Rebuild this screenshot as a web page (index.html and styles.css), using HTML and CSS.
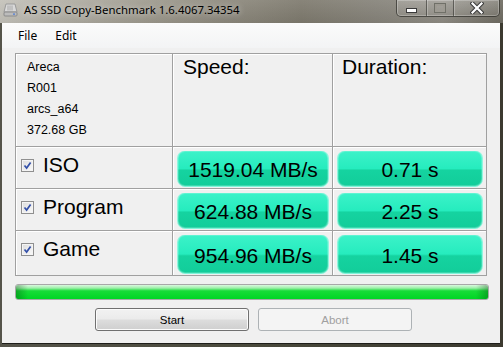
FILE: index.html
```html
<!DOCTYPE html>
<html lang="en">

<head>
    <meta charset="UTF-8">
    <title>AS SSD Copy-Benchmark 1.6.4067.34354</title>
    <link rel="stylesheet" href="styles.css">
</head>

<body>

    <div class="window">
        <!-- Title bar -->
        <div class="titlebar">
            <svg class="app-icon" width="15" height="14" viewBox="0 0 15 14">
                <path d="M3 1 L12 1 L14 9 L1 9 Z" fill="#d9d9d9" stroke="#9a9a9a" stroke-width="1"/>
                <path d="M5 2.5 L5 7.5 M7 2.5 L7 7.5 M9 2.5 L9 7.5" stroke="#a8a8a8" stroke-width="1"/>
                <rect x="1" y="9" width="13" height="4" rx="1" fill="#bcbcbc" stroke="#8a8a8a" stroke-width="1"/>
                <rect x="10" y="10.5" width="2" height="1.2" fill="#4a7bd8"/>
            </svg>
            <span class="title">AS SSD Copy-Benchmark 1.6.4067.34354</span>
            <div class="caption-buttons">
                <span class="cap-btn cap-min"><i></i></span>
                <span class="cap-btn cap-max"><i></i></span>
                <span class="cap-btn cap-close">
                    <svg width="14" height="12" viewBox="0 0 14 12">
                        <path d="M2.5 1.5 L11.5 10.5 M11.5 1.5 L2.5 10.5" stroke="#3a3a3a" stroke-width="4.2" stroke-linecap="square"/>
                        <path d="M2.5 1.5 L11.5 10.5 M11.5 1.5 L2.5 10.5" stroke="#ffffff" stroke-width="2.2" stroke-linecap="square"/>
                    </svg>
                </span>
            </div>
        </div>

        <div class="client">
            <!-- Menu -->
            <div class="menubar">
                <span class="menu-item">File</span>
                <span class="menu-item">Edit</span>
            </div>

            <!-- Results grid -->
            <div class="results">
                <div class="cell info">
                    <div>Areca</div>
                    <div>R001</div>
                    <div>arcs_a64</div>
                    <div>372.68 GB</div>
                </div>
                <div class="cell head head-speed">Speed:</div>
                <div class="cell head head-duration">Duration:</div>

                <div class="cell label">
                    <span class="checkbox"><svg width="11" height="11" viewBox="0 0 11 11"><path d="M2.5 5.5 L4.6 8 L8.6 2.5" fill="none" stroke="#3350a8" stroke-width="1.7"/></svg></span>
                    <span>ISO</span>
                </div>
                <div class="cell value"><div class="bar">1519.04 MB/s</div></div>
                <div class="cell value"><div class="bar">0.71 s</div></div>

                <div class="cell label">
                    <span class="checkbox"><svg width="11" height="11" viewBox="0 0 11 11"><path d="M2.5 5.5 L4.6 8 L8.6 2.5" fill="none" stroke="#3350a8" stroke-width="1.7"/></svg></span>
                    <span>Program</span>
                </div>
                <div class="cell value"><div class="bar">624.88 MB/s</div></div>
                <div class="cell value"><div class="bar">2.25 s</div></div>

                <div class="cell label">
                    <span class="checkbox"><svg width="11" height="11" viewBox="0 0 11 11"><path d="M2.5 5.5 L4.6 8 L8.6 2.5" fill="none" stroke="#3350a8" stroke-width="1.7"/></svg></span>
                    <span>Game</span>
                </div>
                <div class="cell value"><div class="bar">954.96 MB/s</div></div>
                <div class="cell value"><div class="bar">1.45 s</div></div>
            </div>

            <!-- Progress -->
            <div class="progress">
                <div class="progress-fill" style="width: 100%;"></div>
            </div>

            <!-- Buttons -->
            <div class="actions">
                <button class="btn">Start</button>
                <button class="btn" disabled>Abort</button>
            </div>
        </div>
    </div>

</body>

</html>
```

FILE: styles.css
```css
html,
body {
    margin: 0;
    padding: 0;
}

body {
    width: 503px;
    height: 347px;
    overflow: hidden;
    background: linear-gradient(to right, #55544a 0%, #4a4a3c 50%, #3c3a30 100%);
    font-family: "Liberation Sans", Arial, sans-serif;
}

.window {
    display: flex;
    flex-direction: column;
    height: 347px;
}

/* Title bar (Aero glass) */
.titlebar {
    height: 23px;
    display: flex;
    align-items: flex-start;
    background:
        linear-gradient(to bottom, rgba(255, 255, 255, 0.08), rgba(0, 0, 0, 0.05)),
        linear-gradient(to right, #c4c2ba 0%, #b2afa5 12%, #9d998d 30%, #8d897d 45%, #7e7a6e 60%, #86837a 75%, #8f8c84 88%, #6f6c62 100%);
}

.app-icon {
    margin: 3px 0 0 3px;
    flex-shrink: 0;
}

.title {
    margin: 2px 0 0 6px;
    font-family: "Noto Sans", "Open Sans", sans-serif;
    font-size: 11.4px;
    line-height: 16px;
    color: #000;
    text-shadow: 0 0 6px rgba(255, 255, 255, 0.7);
}

.caption-buttons {
    display: flex;
    margin-left: auto;
    margin-right: 3px;
    height: 16px;
    border: 1px solid rgba(40, 40, 36, 0.65);
    border-top: none;
    border-radius: 0 0 5px 5px;
    box-shadow: inset 0 0 0 1px rgba(255, 255, 255, 0.25);
    overflow: hidden;
}

.cap-btn {
    display: flex;
    align-items: center;
    justify-content: center;
    height: 16px;
    background: linear-gradient(to bottom, rgba(255, 255, 255, 0.18), rgba(255, 255, 255, 0.05));
}

.cap-btn + .cap-btn {
    border-left: 1px solid rgba(40, 40, 36, 0.55);
    box-shadow: inset 1px 0 0 rgba(255, 255, 255, 0.25);
}

.cap-min {
    width: 29px;
}

.cap-min i {
    display: block;
    width: 9px;
    height: 3px;
    margin-top: 5px;
    background: #fff;
    border: 1px solid #3a3a3a;
}

.cap-max {
    width: 26px;
}

.cap-max i {
    display: block;
    width: 6px;
    height: 4px;
    border: 2px solid #9d9a92;
    outline: 1px solid #707068;
}

.cap-close {
    width: 45px;
}

/* Client area */
.client {
    flex: 1;
    display: flex;
    flex-direction: column;
    margin: 0 3px 3px 2px;
    background-color: #f0f0f0;
    border-bottom: 1px solid #1e1e1a;
}

.menubar {
    height: 25px;
    display: flex;
    align-items: center;
    padding-left: 16px;
    gap: 18px;
    background: linear-gradient(to bottom, #fbfbfb, #f3f4f5);
    font-family: "Noto Sans", "Open Sans", sans-serif;
    font-size: 12px;
}

.results {
    display: grid;
    grid-template-columns: 157px 160px 154px;
    grid-template-rows: 93px 42px 42px 45px;
    margin: 5px 0 0 13px;
    width: 472px;
    box-sizing: border-box;
    border-top: 1px solid #a0a0a0;
    border-left: 1px solid #a0a0a0;
}

.cell {
    box-sizing: border-box;
    border-right: 1px solid #a0a0a0;
    border-bottom: 1px solid #a0a0a0;
    box-shadow: inset 1px 1px 0 #ffffff;
}

.info {
    padding: 3px 0 0 11px;
    font-size: 12.5px;
    line-height: 21px;
    color: #000;
}

.head {
    padding-top: 1px;
    font-size: 21px;
    line-height: 24px;
}

.head-speed {
    padding-left: 10px;
}

.head-duration {
    padding-left: 9px;
}

.label {
    display: flex;
    align-items: flex-start;
    padding: 6px 0 0 5px;
    font-size: 21px;
    line-height: 24px;
}

.checkbox {
    display: flex;
    align-items: center;
    justify-content: center;
    width: 11px;
    height: 11px;
    margin: 6px 9px 0 0;
    border: 1px solid #8f8f8f;
    background: linear-gradient(135deg, #dcdcdc, #fafafa);
    box-shadow: inset 0 0 0 1px #f4f4f4;
}

.value {
    display: flex;
    padding: 4px 4px 2px 5px;
}

.bar {
    flex: 1;
    display: flex;
    align-items: center;
    justify-content: center;
    padding-top: 3px;
    border-radius: 7px;
    font-size: 21px;
    color: #000;
    background: linear-gradient(to bottom, #3cf2c9 0%, #26ecbe 50%, #15d3a0 55%, #12cd9a 100%);
    box-shadow:
        inset 0 0 0 1px rgba(255, 255, 255, 0.18),
        0 1px 0 #7ff5da,
        -1px 0 0 #8ff6df,
        1px 0 0 #8ff6df;
}

/* Progress bar */
.progress {
    width: 474px;
    height: 16px;
    margin: 8px 0 0 13px;
    box-sizing: border-box;
    border: 1px solid #a8a8a8;
    border-radius: 3px;
    background: #e6e6e6;
    overflow: hidden;
}

.progress-fill {
    height: 100%;
    background:
        linear-gradient(to right, rgba(0, 70, 10, 0.35), rgba(0, 70, 10, 0) 12px, rgba(0, 70, 10, 0) calc(100% - 12px), rgba(0, 70, 10, 0.35)),
        linear-gradient(to bottom, #dcf8e0 0%, #9cf0a8 22%, #18dc38 42%, #00d624 100%);
}

/* Buttons */
.actions {
    display: flex;
    gap: 9px;
    margin: 8px 0 0 93px;
}

.btn {
    width: 154px;
    height: 23px;
    padding: 0;
    border: 1px solid #707070;
    border-radius: 3px;
    font-family: "Liberation Sans", Arial, sans-serif;
    font-size: 11.5px;
    color: #000;
    background: linear-gradient(to bottom, #f2f2f2 0%, #ebebeb 48%, #dddddd 52%, #cfcfcf 100%);
    box-shadow: inset 0 0 0 1px #fbfbfb;
}

.btn:disabled {
    border-color: #adb2b5;
    background: #f4f4f4;
    color: #a0a0a0;
    box-shadow: none;
}
```
